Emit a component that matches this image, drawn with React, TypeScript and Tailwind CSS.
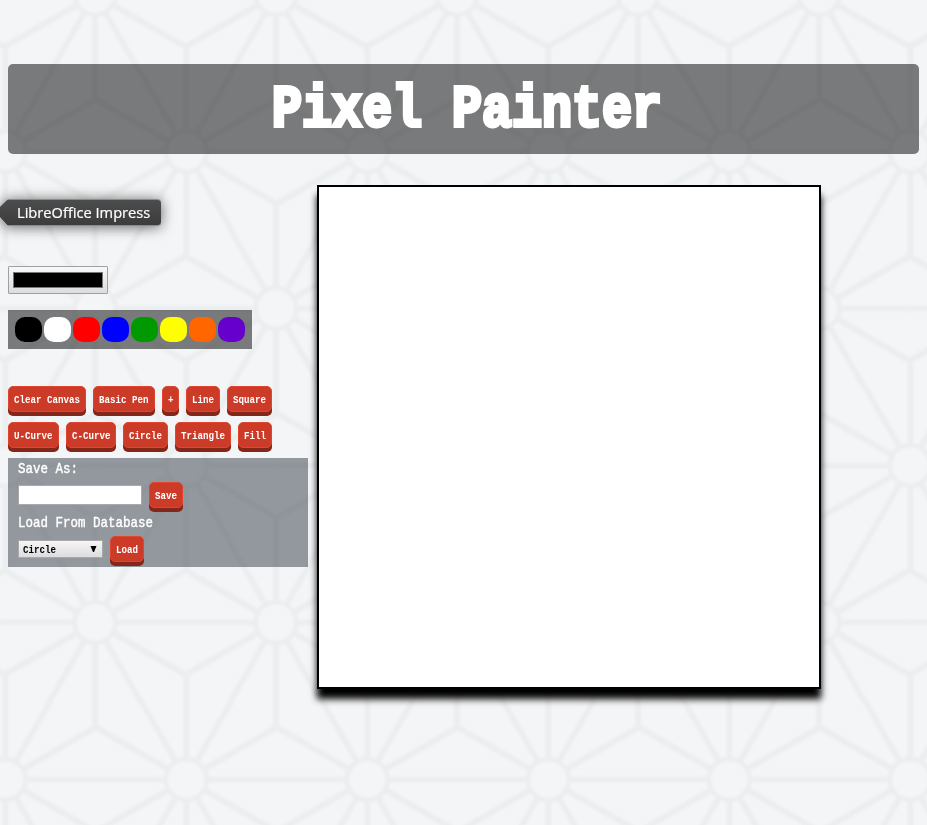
import React from 'react';

const STEP_X = 181;
const STEP_Y = 157;
const HUB = 20.5;

function Backdrop() {
  const hubs: { x: number; y: number }[] = [];
  for (let row = -1; row <= 6; row++) {
    const y = -5.5 + row * STEP_Y;
    const start = row % 2 === 0 ? 95 : 5.3;
    for (let col = -1; col <= 6; col++) hubs.push({ x: start + col * STEP_X, y });
  }
  return (
    <svg className="absolute inset-0 h-full w-full" viewBox="0 0 927 825" aria-hidden="true">
      <g stroke="#ebedee" strokeWidth="5.5" fill="none" className="blur-[1px]">
        {hubs.map((h, i) => (
          <g key={i}>
            <circle cx={h.x} cy={h.y} r={HUB} strokeWidth="4.5" />
            {Array.from({ length: 12 }, (_, k) => {
              const a = (k * Math.PI) / 6;
              const len = k % 2 === 0 ? 91 : 105;
              return (
                <line
                  key={k}
                  x1={h.x + Math.cos(a) * (HUB + 1)}
                  y1={h.y + Math.sin(a) * (HUB + 1)}
                  x2={h.x + Math.cos(a) * len}
                  y2={h.y + Math.sin(a) * len}
                />
              );
            })}
          </g>
        ))}
      </g>
    </svg>
  );
}

function Key({ children }: { children: string }) {
  return (
    <button
      className="h-[26px] shrink-0 rounded-[5px] border border-[#e0452f] bg-[#cc3a28] text-left text-[10.5px] leading-[26px] font-bold text-white shadow-[0_4px_0_#85261a]"
      style={{ width: children.length * 5.5 + 12 }}
    >
      <span className="ml-[5px] inline-block h-[24px] origin-left scale-x-[0.873] align-top whitespace-pre">{children}</span>
    </button>
  );
}

function Label({ children }: { children: string }) {
  return (
    <div className="h-[20px] text-[15px] leading-[22px] text-white [-webkit-text-stroke:0.4px_white]">
      <span className="inline-block origin-left scale-x-[0.833] whitespace-pre">{children}</span>
    </div>
  );
}

function Tooltip() {
  return (
    <div className="absolute top-[199px] left-0 z-10 drop-shadow-[0_1px_7px_rgba(0,0,0,0.6)]">
      <div className="h-[27px] w-[161px] rounded-r-[4px] bg-[#b9b9b9] [clip-path:polygon(8px_0,100%_0,100%_100%,8px_100%,0_19px,0_7px)]">
        <div className="h-[27px] w-[161px] rounded-r-[4px] border-y border-[#8c8c8c] bg-linear-to-b from-[#4c4c4c] to-[#3c3c3c] pl-[17px] font-['Open_Sans','Noto_Sans',sans-serif] text-[14.5px] leading-[26px] whitespace-nowrap text-white [clip-path:polygon(8px_0,100%_0,100%_100%,8px_100%,0_18px,0_8px)]">
          <span className="inline-block origin-left scale-x-[1.01] [-webkit-text-stroke:0.2px_white]">LibreOffice Impress</span>
        </div>
      </div>
    </div>
  );
}

const swatches = ['bg-black', 'bg-white', 'bg-[#ff0000]', 'bg-[#0000ff]', 'bg-[#009900]', 'bg-[#ffff00]', 'bg-[#ff6600]', 'bg-[#6600cc]'];

export default function App() {
  return (
    <div className="relative h-[825px] w-[927px] overflow-hidden bg-[#f3f5f7] font-['Liberation_Mono',monospace]">
      <Backdrop />
      <Tooltip />
      <div className="relative px-2 pt-16">
        <header className="flex h-[90px] justify-center rounded-[5px] bg-black/50 pt-[2px] pl-[7px]">
          <h1 className="origin-center scale-x-[0.833] text-[60px] leading-[88px] font-bold whitespace-pre text-white [-webkit-text-stroke:4px_white] [paint-order:stroke]">
            Pixel Painter
          </h1>
        </header>
        <main className="flex">
          <section className="w-[309px] pt-[112px]">
            <div className="h-[28px] w-[100px] rounded-[1px] border border-[#a0a0a0] bg-linear-to-b from-[#f8f8f8] to-[#dddddd] px-1 py-[5px]">
              <div className="h-[16px] border border-[#777777] bg-black" />
            </div>
            <div className="mt-4 flex h-[39px] w-[244px] gap-[2px] bg-black/50 px-[7px] pt-[7px]">
              {swatches.map((c) => (
                <div key={c} className={`h-[25px] w-[27px] rounded-[10px] ${c}`} />
              ))}
            </div>
            <div className="mt-[37px] flex gap-[7px]">
              <Key>Clear Canvas</Key>
              <Key>Basic Pen</Key>
              <Key>+</Key>
              <Key>Line</Key>
              <Key>Square</Key>
            </div>
            <div className="mt-[10px] flex gap-[7px]">
              <Key>U-Curve</Key>
              <Key>C-Curve</Key>
              <Key>Circle</Key>
              <Key>Triangle</Key>
              <Key>Fill</Key>
            </div>
            <div className="mt-[10px] h-[109px] w-[300px] bg-[#323c46]/50 px-[10px] pt-px">
              <Label>Save As:</Label>
              <div className="mt-[3px] flex gap-[7px]">
                <input className="mt-[3px] h-[20px] w-[124px] border border-[#a9a9a9] bg-white px-1 text-[10px] outline-none" />
                <Key>Save</Key>
              </div>
              <div className="h-[5px]" />
              <Label>Load From Database</Label>
              <div className="mt-[3px] flex gap-[7px]">
                <div className="mt-[4px] flex h-[18px] w-[85px] items-center justify-between border border-[#a9a9a9] bg-linear-to-b from-[#f6f6f6] to-[#dddddd] pr-[5px] pl-[4px] text-[10.5px] leading-[16px] font-bold text-black">
                  <span className="origin-left scale-x-[0.873] pt-[2px]">Circle</span>
                  <svg className="h-[6px] w-[7px]" viewBox="0 0 7 6">
                    <path d="M0.5 0H6.5L4 6H3Z" />
                  </svg>
                </div>
                <Key>Load</Key>
              </div>
            </div>
          </section>
          <div className="mt-[31px] h-[504px] w-[504px] border-2 border-black bg-white shadow-[0_10px_7px_#000]" />
        </main>
      </div>
    </div>
  );
}
